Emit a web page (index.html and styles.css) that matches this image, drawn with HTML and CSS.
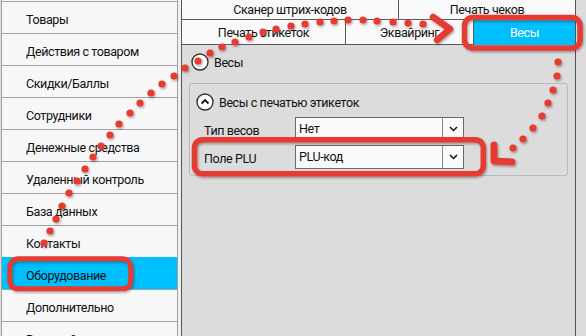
FILE: index.html
```html
<!DOCTYPE html>
<html lang="ru">
<head>
    <meta charset="UTF-8">
    <meta name="viewport" content="width=device-width, initial-scale=1.0">
    <title>Настройки — Оборудование</title>
    <link rel="stylesheet" href="styles.css">
</head>
<body>
    <div class="window">
        <div class="sidebar">
            <ul class="menu">
                <li>Товары</li>
                <li>Действия с товаром</li>
                <li>Скидки/Баллы</li>
                <li>Сотрудники</li>
                <li>Денежные средства</li>
                <li>Удаленный контроль</li>
                <li>База данных</li>
                <li>Контакты</li>
                <li class="active">Оборудование</li>
                <li>Дополнительно</li>
                <li>Внешний вид</li>
            </ul>
        </div>
        <div class="gap"></div>
        <div class="main">
            <div class="tab-row top">
                <div class="tab scanner">Сканер штрих-кодов</div>
                <div class="tab">Печать чеков</div>
            </div>
            <div class="tab-row bottom">
                <div class="tab labels">Печать этикеток</div>
                <div class="tab acquiring">Эквайринг</div>
                <div class="tab selected">Весы</div>
            </div>
            <div class="panel">
                <div class="expander-head outer">
                    <span class="toggle">
                        <svg width="18" height="18" viewBox="0 0 18 18"><circle cx="9" cy="9" r="8" fill="#fff" stroke="#333" stroke-width="1.4"/></svg>
                    </span>
                    Весы
                </div>
                <div class="group">
                    <div class="expander-head">
                        <span class="toggle">
                            <svg width="18" height="18" viewBox="0 0 18 18"><circle cx="9" cy="9" r="8" fill="#fff" stroke="#333" stroke-width="1.4"/><path d="M5.5 10.5 L9 7 L12.5 10.5" fill="none" stroke="#111" stroke-width="1.8"/></svg>
                        </span>
                        Весы с печатью этикеток
                    </div>
                    <div class="field">
                        <label>Тип весов</label>
                        <div class="combo">
                            <span class="value">Нет</span>
                            <span class="arrow"><svg width="9" height="6" viewBox="0 0 9 6"><path d="M1 1 L4.5 4.5 L8 1" fill="none" stroke="#111" stroke-width="1.5"/></svg></span>
                        </div>
                    </div>
                    <div class="field">
                        <label>Поле PLU</label>
                        <div class="combo">
                            <span class="value">PLU-код</span>
                            <span class="arrow"><svg width="9" height="6" viewBox="0 0 9 6"><path d="M1 1 L4.5 4.5 L8 1" fill="none" stroke="#111" stroke-width="1.5"/></svg></span>
                        </div>
                    </div>
                </div>
            </div>
        </div>
    </div>

    <svg class="marks" width="586" height="336" viewBox="0 0 586 336">
        <defs>
            <filter id="shadow" x="-30%" y="-30%" width="160%" height="160%">
                <feDropShadow dx="1" dy="1.5" stdDeviation="0.8" flood-color="#000" flood-opacity="0.35"/>
            </filter>
        </defs>
        <g fill="none" stroke="#e53a30" filter="url(#shadow)">
            <rect x="9.8" y="258.8" width="121" height="30" rx="8" stroke-width="5"/>
            <rect x="464.5" y="17.5" width="115.5" height="30.5" rx="8" stroke-width="5.5"/>
            <rect x="194.5" y="139.7" width="288.8" height="34" rx="8" stroke-width="5.5"/>
            <polyline points="433,17 450,29 437,40" stroke-width="6.5" stroke-linejoin="round" stroke-linecap="round"/>
            <polyline points="494,145 494,161 512,162" stroke-width="7" stroke-linejoin="round" stroke-linecap="round"/>
        </g>
        <g fill="#e53a30" filter="url(#shadow)">
            <circle cx="44" cy="243" r="3.6"/>
            <circle cx="50" cy="231" r="3.6"/>
            <circle cx="56" cy="219" r="3.6"/>
            <circle cx="62" cy="206" r="3.6"/>
            <circle cx="69" cy="193" r="3.6"/>
            <circle cx="77" cy="181" r="3.6"/>
            <circle cx="85" cy="169" r="3.6"/>
            <circle cx="93" cy="157" r="3.6"/>
            <circle cx="101" cy="146" r="3.6"/>
            <circle cx="110" cy="135" r="3.6"/>
            <circle cx="119" cy="124" r="3.6"/>
            <circle cx="130" cy="113" r="3.6"/>
            <circle cx="140" cy="103" r="3.6"/>
            <circle cx="151" cy="93" r="3.6"/>
            <circle cx="162" cy="84" r="3.6"/>
            <circle cx="174" cy="76" r="3.6"/>
            <circle cx="185" cy="68" r="3.6"/>
            <circle cx="198" cy="61" r="3.6"/>
            <circle cx="210" cy="53" r="3.6"/>
            <circle cx="222" cy="47" r="3.6"/>
            <circle cx="235" cy="42" r="3.6"/>
            <circle cx="249" cy="37" r="3.6"/>
            <circle cx="263" cy="32" r="3.6"/>
            <circle cx="276" cy="29" r="3.6"/>
            <circle cx="291" cy="26" r="3.6"/>
            <circle cx="305" cy="24" r="3.6"/>
            <circle cx="320" cy="22" r="3.6"/>
            <circle cx="334" cy="21" r="3.6"/>
            <circle cx="348" cy="20" r="3.6"/>
            <circle cx="363" cy="20" r="3.6"/>
            <circle cx="377" cy="21" r="3.6"/>
            <circle cx="393" cy="22" r="3.6"/>
            <circle cx="408" cy="23" r="3.6"/>
            <circle cx="423" cy="24" r="3.6"/>

            <circle cx="558" cy="62" r="3.6"/>
            <circle cx="557" cy="76" r="3.6"/>
            <circle cx="553" cy="90" r="3.6"/>
            <circle cx="548" cy="103" r="3.6"/>
            <circle cx="542" cy="116" r="3.6"/>
            <circle cx="533" cy="128" r="3.6"/>
            <circle cx="523" cy="139" r="3.6"/>
            <circle cx="513" cy="148" r="3.6"/>
        </g>
    </svg>
</body>
</html>
```

FILE: styles.css
```css
* {
    box-sizing: border-box;
}
body {
    margin: 0;
    width: 586px;
    height: 336px;
    overflow: hidden;
    position: relative;
    background: #dcdcdc;
    font-family: Roboto, "Noto Sans", sans-serif;
    font-size: 12.5px;
    letter-spacing: -0.4px;
    color: #111;
}
.window {
    display: flex;
    height: 336px;
}

/* left menu */
.sidebar {
    width: 177px;
    margin-left: 1px;
    background: #f7f7f7;
    border-left: 1px solid #a0a0a0;
    border-right: 1px solid #a0a0a0;
    overflow: hidden;
}
.menu {
    list-style: none;
    margin: 0;
    padding: 1px 0 0;
}
.menu li {
    height: 32px;
    border-top: 1px solid #a0a0a0;
    padding: 3px 0 0 24px;
    line-height: 29px;
    white-space: nowrap;
}
.menu li.active {
    background: #00bfff;
    border-top-color: #00bfff;
}
.gap {
    width: 3px;
    background: #f0f0f0;
}

/* right side */
.main {
    width: 395px;
    display: flex;
    flex-direction: column;
    border-left: 1px solid #555;
    border-right: 1px solid #555;
}
.tab-row {
    display: flex;
    background: #f9f9f9;
}
.tab-row.top {
    height: 20px;
    border-bottom: 1px solid #5a5a5a;
}
.tab-row.bottom {
    height: 25px;
}
.tab {
    flex: 1;
    display: flex;
    align-items: center;
    justify-content: center;
    white-space: nowrap;
}
.tab-row.bottom .tab {
    border-bottom: 1px solid #5a5a5a;
}
.tab.scanner {
    flex: none;
    width: 217px;
    border-right: 1px solid #5a5a5a;
}
.tab.labels {
    flex: none;
    width: 164px;
    border-right: 1px solid #5a5a5a;
}
.tab.acquiring {
    flex: none;
    width: 128px;
    border-right: 1px solid #5a5a5a;
}
.tab.selected {
    background: #00bfff;
    color: #fff;
    border-bottom-color: #00bfff !important;
}

.panel {
    flex: 1;
    background: #dcdcdc;
    padding: 8px 7px 0;
}
.expander-head {
    display: flex;
    align-items: center;
    gap: 5px;
    height: 18px;
}
.expander-head.outer {
    margin-left: 2px;
}
.toggle {
    display: flex;
}
.group {
    margin-top: 12px;
    border: 1px solid #b9b9b9;
    border-radius: 3px;
    padding: 9px 6px 6px;
}
.field {
    display: flex;
    align-items: center;
    height: 24px;
    margin-top: 4px;
    padding-left: 8px;
}
.expander-head + .field {
    margin-top: 6px;
}
.field label {
    width: 91px;
    padding-top: 3px;
}
.combo {
    display: flex;
    width: 169px;
    height: 24px;
    border: 1px solid #6a6a6a;
    background: #fafafa;
}
.combo .value {
    flex: 1;
    padding-left: 3px;
    line-height: 22px;
}
.combo .arrow {
    width: 21px;
    border-left: 1px solid #8a8a8a;
    display: flex;
    align-items: center;
    justify-content: center;
}

/* annotation overlay */
.marks {
    position: absolute;
    top: 0;
    left: 0;
    pointer-events: none;
}
```
